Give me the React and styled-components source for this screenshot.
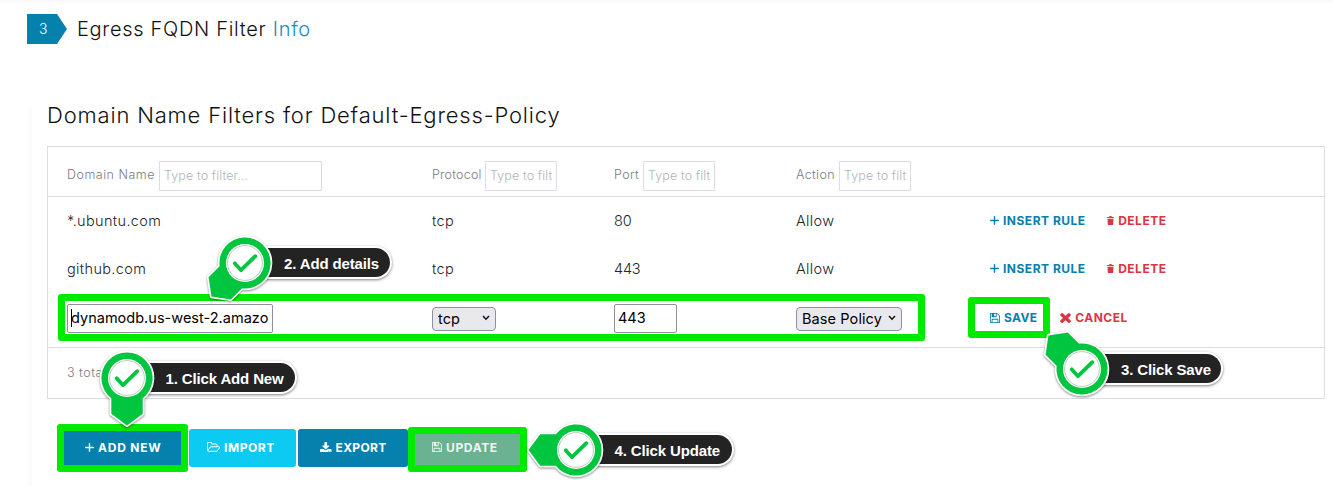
import React from "react";
import styled, { createGlobalStyle } from "styled-components";

const GlobalStyle = createGlobalStyle`
  * { box-sizing: border-box; }
  body {
    margin: 0;
    background: #fff;
    font-family: Inter, "Open Sans", sans-serif;
    color: #212529;
    overflow: hidden;
  }
`;

const Page = styled.main`
  position: relative;
  width: 1333px;
  height: 486px;
  overflow: hidden;
  background: linear-gradient(#f8f8f8, #fff 5px);
`;

const StepHeader = styled.header`
  display: flex;
  align-items: center;
  height: 30px;
  margin: 14px 0 0 27px;
`;

const StepBadge = styled.span`
  width: 40px;
  height: 30px;
  padding-left: 12px;
  line-height: 30px;
  font-size: 14px;
  font-weight: 300;
  color: #fff;
  background: #0680ad;
  clip-path: polygon(0 0, 75% 0, 100% 50%, 75% 100%, 0 100%);
`;

const StepTitle = styled.h1`
  margin: 0 0 0 10px;
  font-size: 20px;
  font-weight: 350;
  letter-spacing: 0.7px;
  line-height: 30px;
  color: #111;
  white-space: pre;
`;

const InfoLink = styled.a`
  color: #1b8cb7;
  letter-spacing: 0.7px;
`;

const Card = styled.section`
  margin: 54px 0 0 32px;
  height: 420px;
  padding: 0 8px 0 15px;
  background: #fff;
  box-shadow: -1px 8px 8px rgba(0, 0, 0, 0.04);
`;

const CardTitle = styled.h2`
  margin: 0;
  padding-top: 2px;
  height: 48px;
  line-height: 30px;
  font-size: 22px;
  font-weight: 330;
  letter-spacing: 0.82px;
  color: #111;
`;

const Table = styled.div`
  width: 1278px;
  height: 253px;
  border: 1px solid #dcdde1;
`;

const Row = styled.div`
  display: grid;
  grid-template-columns: 365px 182px 182px 193px 1fr;
  align-items: center;
  height: ${(p) => p.$height || 48}px;
  padding: 0 0 ${(p) => p.$bottom ?? 2}px 19px;
  font-size: 14.5px;
  font-weight: 330;
  letter-spacing: 0.35px;
`;

const HeadRow = styled(Row)`
  height: 49px;
  padding-top: 9px;
  padding-bottom: 0;
  font-size: 12.5px;
  color: #7b7b7f;
`;

const BodyRows = styled.div`
  height: 152px;
  border-top: 1px solid #dcdde1;
  border-bottom: 1px solid #dcdde1;
`;

const HeadCell = styled.label`
  display: flex;
  align-items: center;
  justify-content: space-between;
  width: ${(p) => p.$width}px;
  letter-spacing: ${(p) => p.$spacing}px;
  line-height: 28px;
`;

const HeadLabel = styled.span`
  padding-bottom: 2px;
`;

const FilterInput = styled.input`
  width: ${(p) => p.$width}px;
  height: 30px;
  padding: 0 4px 2px;
  border: 1px solid #dcdde3;
  border-radius: 0;
  background: #fff;
  font: 300 12.5px Inter, sans-serif;
  letter-spacing: 0.1px;
  &::placeholder { color: #b4b4b8; opacity: 1; }
`;

const Digits = styled.span`
  letter-spacing: -0.2px;
`;

const Field = styled.span`
  display: flex;
  align-items: center;
  width: ${(p) => p.$width}px;
  height: 29px;
  padding: 0 0 2px 3px;
  border: 1px solid #8f8f9d;
  border-radius: 2px;
  background: #fff;
  color: #000;
  font-weight: 370;
  letter-spacing: ${(p) => p.$spacing || 0}px;
  white-space: nowrap;
`;

const Caret = styled.i`
  width: 1px;
  height: 18px;
  margin-right: -1px;
  background: #000;
`;

const Select = styled.span`
  display: flex;
  align-items: center;
  justify-content: space-between;
  width: ${(p) => p.$width}px;
  height: 24px;
  padding: 0 5px 1px;
  border: 1px solid #8f8f9d;
  border-radius: 4px;
  background: #e9e9ed;
  color: #000;
  font-weight: 370;
  letter-spacing: 0.1px;
  white-space: nowrap;
`;

const Actions = styled.div`
  display: flex;
  align-items: center;
  padding: 0 0 ${(p) => p.$bottom || 0}px 1px;
`;

const Action = styled.a`
  display: flex;
  align-items: center;
  gap: ${(p) => p.$gap || 4}px;
  margin-right: ${(p) => p.$after || 0}px;
  font-size: 12px;
  font-weight: 650;
  letter-spacing: ${(p) => p.$spacing || 0.5}px;
  color: ${(p) => (p.$danger ? "#dc3545" : "#0680ad")};
  white-space: nowrap;
`;

const TableFooter = styled.div`
  height: 50px;
  padding-left: 19px;
  line-height: 49px;
  font-size: 12.5px;
  font-weight: 330;
  letter-spacing: 0.5px;
  color: #7b7b7f;
`;

const ButtonBar = styled.div`
  display: flex;
  gap: 2px;
  margin: 30px 0 0 13px;
`;

const Button = styled.button`
  display: flex;
  align-items: center;
  gap: 4px;
  width: ${(p) => p.$width}px;
  height: 38px;
  padding: 0 0 2px ${(p) => p.$pad}px;
  border: 0;
  border-radius: 3px;
  background: ${(p) => p.$bg};
  color: ${(p) => p.$color || "#fff"};
  font: 650 12px Inter, sans-serif;
  letter-spacing: ${(p) => p.$spacing}px;
  white-space: nowrap;
`;

const Highlight = styled.div`
  position: absolute;
  left: ${(p) => p.$x}px;
  top: ${(p) => p.$y}px;
  width: ${(p) => p.$w}px;
  height: ${(p) => p.$h}px;
  border: 7px solid #00ea00;
  border-radius: 3px;
`;

const CalloutRoot = styled.div`
  position: absolute;
  left: ${(p) => p.$x}px;
  top: ${(p) => p.$y}px;
`;

const CalloutLabel = styled.div`
  position: absolute;
  left: 0;
  top: -17px;
  width: ${(p) => p.$width}px;
  height: 33px;
  padding: 1px 0 0 39px;
  border: 2px solid #fff;
  border-left: 0;
  border-radius: 0 17px 17px 0;
  background: #232323;
  box-shadow: 0 1px 3px rgba(0, 0, 0, 0.5);
  color: #fff;
  font: bold 15px/29px "Liberation Sans", Arial, sans-serif;
  letter-spacing: -0.14px;
  white-space: nowrap;
`;

const Pin = styled.svg`
  position: absolute;
  left: -60px;
  top: -60px;
  filter: drop-shadow(0 1px 1px rgba(0, 0, 0, 0.45));
`;

const Glyph = styled.svg`
  display: block;
  flex: none;
`;

const PATHS = {
  floppy:
    "M512 1536h768v-384h-768v384zm896 0h128v-896q0-14-10-38.5t-20-34.5l-281-281q-10-10-34-20t-39-10v416q0 40-28 68t-68 28h-576q-40 0-68-28t-28-68v-416h-128v1280h128v-416q0-40 28-68t68-28h832q40 0 68 28t28 68v416zm-384-928v-320q0-13-9.5-22.5t-22.5-9.5h-192q-13 0-22.5 9.5t-9.5 22.5v320q0 13 9.5 22.5t22.5 9.5h192q13 0 22.5-9.5t9.5-22.5zm640 32v928q0 40-28 68t-68 28h-1344q-40 0-68-28t-28-68v-1344q0-40 28-68t68-28h928q40 0 88 20t76 48l280 280q28 28 48 76t20 88z",
  times:
    "M1490 1322q0 40-28 68l-136 136q-28 28-68 28t-68-28l-294-294-294 294q-28 28-68 28t-68-28l-136-136q-28-28-28-68t28-68l294-294-294-294q-28-28-28-68t28-68l136-136q28-28 68-28t68 28l294 294 294-294q28-28 68-28t68 28l136 136q28 28 28 68t-28 68l-294 294 294 294q28 28 28 68z",
  download:
    "M1344 1344q0-26-19-45t-45-19-45 19-19 45 19 45 45 19 45-19 19-45zm256 0q0-26-19-45t-45-19-45 19-19 45 19 45 45 19 45-19 19-45zm128-224v320q0 40-28 68t-68 28h-1472q-40 0-68-28t-28-68v-320q0-40 28-68t68-28h465l135 136q58 56 136 56t136-56l136-136h464q40 0 68 28t28 68zm-325-569q17 41-14 70l-448 448q-18 19-45 19t-45-19l-448-448q-31-29-14-70 17-39 59-39h256v-448q0-26 19-45t45-19h256q26 0 45 19t19 45v448h256q42 0 59 39z",
  folder:
    "M1845 931q0-35-53-35h-1088q-40 0-85.5 21.5t-71.5 52.5l-294 363q-18 24-18 40 0 35 53 35h1088q40 0 86-22t71-53l294-363q18-22 18-39zm-1141-163h768v-160q0-40-28-68t-68-28h-576q-40 0-68-28t-28-68v-64q0-40-28-68t-68-28h-320q-40 0-68 28t-28 68v853l256-315q44-53 116-87.5t140-34.5zm1269 163q0 62-46 120l-295 363q-43 53-116 87.5t-140 34.5h-1088q-92 0-158-66t-66-158v-960q0-92 66-158t158-66h320q92 0 158 66t66 158v32h544q92 0 158 66t66 158v160h192q54 0 99 24.5t67 70.5q15 32 15 68z",
};

const BOXES = {
  floppy: "128 128 1536 1536",
  times: "302 238 1188 1316",
  download: "64 0 1664 1536",
  folder: "64 160 1909 1408",
};

const Icon = ({ name, w, h }) => (
  <Glyph width={w} height={h} viewBox={BOXES[name]} preserveAspectRatio="none" fill="currentColor">
    <path d={PATHS[name]} />
  </Glyph>
);

const Plus = () => (
  <Glyph width="9" height="9" viewBox="0 0 9 9" stroke="currentColor" strokeWidth="1.4" strokeLinecap="round">
    <path d="M4.5.7v7.6M.7 4.5h7.6" />
  </Glyph>
);

const Trash = () => (
  <Glyph width="7" height="9" viewBox="0 0 7 9" fill="currentColor">
    <path d="M2.3.9V.3Q2.3 0 2.6 0h1.8q.3 0 .3.3v.6H7v1.2H0V.9zM.5 2.8h6L6.2 8.4q0 .6-.6.6H1.4q-.6 0-.6-.6z" />
  </Glyph>
);

const Chevron = () => (
  <Glyph width="8" height="6" viewBox="0 0 8 6" fill="none" stroke="#111" strokeWidth="1.5">
    <path d="M1 1l3 3.2L7 1" />
  </Glyph>
);

const PIN_SHAPE =
  "M-15.7 20.2A25.6 25.6 0 1 1 15.7 20.2L15.7 35.8L0 47.5L-15.7 35.8Z";

const Callout = ({ x, y, angle, width, children }) => (
  <CalloutRoot $x={x} $y={y}>
    <CalloutLabel $width={width}>{children}</CalloutLabel>
    <Pin width="120" height="120" viewBox="-60 -60 120 120">
      <g transform={`rotate(${angle})`}>
        <path d={PIN_SHAPE} fill="#00c53f" stroke="#fff" strokeWidth="3.4" strokeLinejoin="round" />
        <path d={PIN_SHAPE} fill="#00c53f" />
      </g>
      <circle r="19" fill="#fff" />
      <circle r="17.4" fill="#fff" stroke="#b5c5b9" strokeWidth="0.9" />
      <path
        d="M-10.3 .3L-4 7.2L10.3 -6.8"
        fill="none"
        stroke="#00c53f"
        strokeWidth="3.8"
        strokeLinecap="round"
        strokeLinejoin="round"
      />
    </Pin>
  </CalloutRoot>
);

const FILTERS = [
  { label: "Domain Name", width: 255, input: 163, spacing: 0.5 },
  { label: "Protocol", width: 125, input: 72, spacing: 0.22 },
  { label: "Port", width: 101, input: 72, spacing: 0.4 },
  { label: "Action", width: 115, input: 72, spacing: 0.35 },
];

const RULES = [
  { domain: "*.ubuntu.com", protocol: "tcp", port: "80", action: "Allow" },
  { domain: "github.com", protocol: "tcp", port: "443", action: "Allow" },
];

export default function App() {
  return (
    <Page>
      <GlobalStyle />
      <StepHeader>
        <StepBadge>3</StepBadge>
        <StepTitle>
          Egress FQDN Filter <InfoLink>Info</InfoLink>
        </StepTitle>
      </StepHeader>

      <Card>
        <CardTitle>Domain Name Filters for Default-Egress-Policy</CardTitle>
        <Table>
          <HeadRow>
            {FILTERS.map((f) => (
              <HeadCell key={f.label} $width={f.width} $spacing={f.spacing}>
                <HeadLabel>{f.label}</HeadLabel>
                <FilterInput
                  $width={f.input}
                  placeholder={f.input > 100 ? "Type to filter..." : "Type to filt"}
                />
              </HeadCell>
            ))}
          </HeadRow>
          <BodyRows>
            {RULES.map((r) => (
              <Row key={r.domain}>
                <span>{r.domain}</span>
                <span>{r.protocol}</span>
                <Digits>{r.port}</Digits>
                <span>{r.action}</span>
                <Actions>
                  <Action $after={21.5} $spacing={0.5}>
                    <Plus />
                    INSERT RULE
                  </Action>
                  <Action $danger>
                    <Trash />
                    DELETE
                  </Action>
                </Actions>
              </Row>
            ))}
            <Row $height={51} $bottom={0}>
              <Field $width={206} $spacing={0.02}>
                <Caret />
                dynamodb.us-west-2.amazo
              </Field>
              <Select $width={64}>
                tcp
                <Chevron />
              </Select>
              <Field $width={63}>443</Field>
              <Select $width={106}>
                Base Policy
                <Chevron />
              </Select>
              <Actions $bottom={2}>
                <Action $after={23} $spacing={0.35}>
                  <Icon name="floppy" w={10} h={10} />
                  SAVE
                </Action>
                <Action $danger $spacing={0.45}>
                  <Icon name="times" w={11} h={11} />
                  CANCEL
                </Action>
              </Actions>
            </Row>
          </BodyRows>
          <TableFooter>3 total</TableFooter>
        </Table>

        <ButtonBar>
          <Button $width={127} $pad={25} $bg="#0680ad" $spacing={0.8}>
            <Plus />
            ADD NEW
          </Button>
          <Button $width={107} $pad={18} $bg="#0dcaf3" $spacing={0.55}>
            <Icon name="folder" w={13} h={10} />
            IMPORT
          </Button>
          <Button $width={109.5} $pad={22} $bg="#0680ad" $spacing={0.35}>
            <Icon name="download" w={11.5} h={10.5} />
            EXPORT
          </Button>
          <Button $width={114} $pad={22.5} $bg="#6ab292" $color="#edf7f1" $spacing={0.65}>
            <Icon name="floppy" w={10} h={10} />
            UPDATE
          </Button>
        </ButtonBar>
      </Card>

      <Highlight $x={58} $y={294} $w={867} $h={47} />
      <Highlight $x={968} $y={297} $w={82} $h={41} />
      <Highlight $x={57} $y={424} $w={131} $h={48} />
      <Highlight $x={408} $y={427} $w={119} $h={45} />

      <Callout x={126.5} y={377.5} angle={0} width={170.5}>1. Click Add New</Callout>
      <Callout x={245} y={263.3} angle={45} width={147}>2. Add details</Callout>
      <Callout x={1082} y={369.3} angle={135} width={141}>3. Click Save</Callout>
      <Callout x={575.5} y={450} angle={90} width={158.5}>4. Click Update</Callout>
    </Page>
  );
}
